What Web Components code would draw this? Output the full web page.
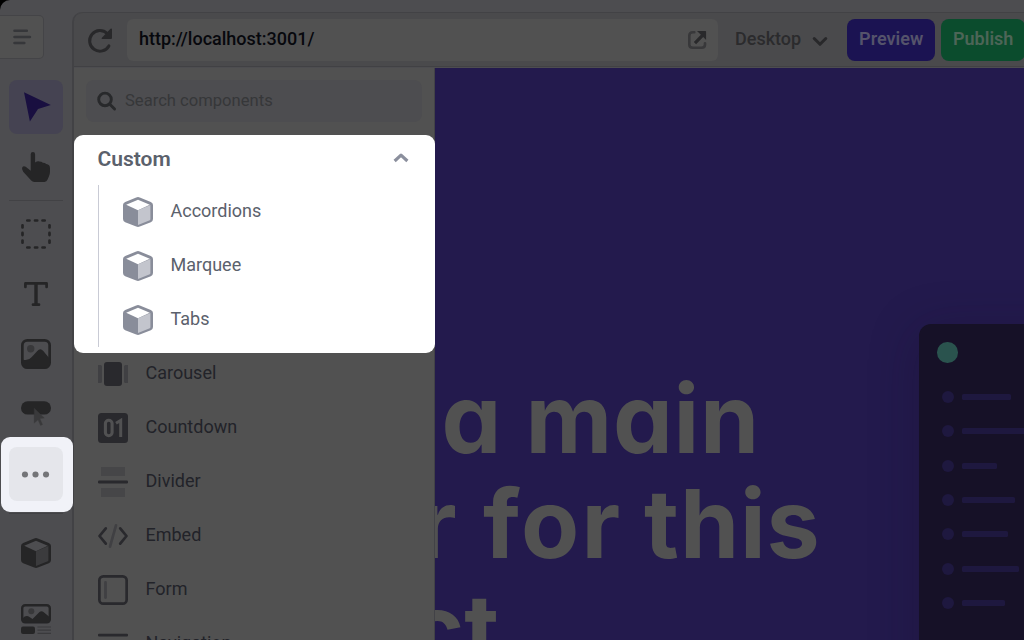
<!DOCTYPE html>
<html lang="en">
<head>
<meta charset="utf-8">
<title>Page builder</title>
<style>
html,body{margin:0;width:1024px;height:640px;overflow:hidden;background:#000;font-family:Roboto,"Liberation Sans",sans-serif}
</style>
</head>
<body>
<builder-app></builder-app>
<script>
const define = (name, css, html) => customElements.define(name, class extends HTMLElement {
  connectedCallback() {
    if (this.shadowRoot) return;
    const t = document.createElement('template');
    t.innerHTML = `<style>*{box-sizing:border-box}${css}</style>` + (typeof html === 'function' ? html(this) : html);
    this.attachShadow({mode: 'open'}).append(t.content.cloneNode(true));
  }
});

const cube = `<path fill="currentColor" d="M13.2.5q1.8-.8 3.6 0l11 4.400q2.200.9 2.200 3.200v14q0 2.300-2.200 3.200l-11 4.300q-1.800.8-3.600 0l-11-4.300Q0 24.400 0 22.100v-14q0-2.300 2.200-3.200z"/>
  <path fill="var(--face,#fff)" d="M3.200 7.700 15 2.800l11.800 4.900L15 13.300z"/><path fill="var(--side,#c3c5cd)" d="M15 13.300 27.400 8v14.300q0 .7-.6 1L15 28z"/>`;

const icons = {
  menu: `<g stroke="currentColor" stroke-width="2.600" stroke-linecap="round"><path d="M8.500 8.700h12.300M8.500 15h15.400M8.500 21h9.800"/></g>`,
  pointer: `<path fill="currentColor" d="M3 .3 29.800 13 17 16.900 8.900 29.600z"/>`,
  hand: `<path fill="currentColor" d="M9.700 2.200a2.200 2.200 0 0 1 4.400 0v8.300q2.200-1.500 4.100-1.100 2.400 0 3.700 1.400 2 .1 3.400 1.100 3.700.3 3.700 4.300v3.500q0 2.300-1.100 4.800l-1.300 3q-.9 2.400-3.200 2.400H13.200q-1.700 0-3-1.400L2.200 19.700Q.3 17 1.300 15.200q1.200-1.600 3.400-.4l5 4z"/>`,
  box: `<g fill="none" stroke="currentColor" stroke-width="2.700" stroke-linecap="round"><path d="M6.300 1.500h2.200M14 1.500h2.200M21.500 1.500h2.200M6.300 28.500h2.200M14 28.500h2.200M21.500 28.500h2.200M1.500 6.300v2.200M1.500 13.900v2.200M1.500 21.500v2.200M28.500 6.300v2.200M28.500 13.900v2.200M28.500 21.500v2.200"/></g>`,
  text: `<path fill="none" stroke="currentColor" stroke-width="2.700" stroke-linecap="round" stroke-linejoin="round" d="M4.400 8V4.400h21.200V8"/><path fill="none" stroke="currentColor" stroke-width="3.400" d="M15 4v21.500"/><path stroke="currentColor" stroke-width="2.700" stroke-linecap="round" d="M12 25.700h6"/>`,
  image: `<rect x="1.350" y="1.350" width="27.300" height="27.300" rx="5" fill="none" stroke="currentColor" stroke-width="2.700"/><circle cx="9.700" cy="9.700" r="3.700" fill="#38383a"/><path fill="currentColor" d="M1.500 20.500q5.500 2 9.300-2.500l5.500-6q3-3.500 6 0l6.200 7.500V24q0 4.500-4.500 4.500H6Q1.500 28.500 1.500 24z"/>`,
  button: `<rect x="0" y="2.200" width="30" height="13.400" rx="6.700" fill="currentColor"/><path fill="#39393b" stroke="#39393b" stroke-width=".4" d="M13.200 9.200 23.300 19l-4.500.5 2.700 6-1.900.9-2.600-5.600-3.800 3.300z"/>`,
  cube,
  media: `<rect x="1.200" y="1.200" width="27.600" height="17.200" rx="3" fill="none" stroke="currentColor" stroke-width="2.400"/><circle cx="10.300" cy="7.300" r="3" fill="#38383a"/><path fill="currentColor" d="M1.500 14.500q3.500-4 7-1.500l3 2 7-7q2-1.500 4 0l6 5v5.500h-27z"/><rect y="22.500" width="14" height="7.500" rx="2" fill="currentColor"/><path stroke="#3a3a3c" stroke-width="1.200" d="M16.500 23h13.500M16.500 26.200h13.500M16.500 29.300h13.500"/>`,
  carousel: `<path fill="#404043" d="M0 6h2.500Q4 6 4 7.500v15Q4 24 2.500 24H0zM30 6h-2.500Q26 6 26 7.500v15q0 1.500 1.500 1.500H30z"/><rect x="6" y="3" width="18" height="24" rx="3" fill="currentColor"/>`,
  countdown: `<rect width="30" height="30" rx="3.500" fill="currentColor"/><rect x="7.400" y="7.300" width="6.700" height="15.400" rx="3.300" fill="none" stroke="#515152" stroke-width="3.100"/><path d="M18 10.300l4.700-2.800v16.500" fill="none" stroke="#515152" stroke-width="3"/>`,
  divider: `<path fill="#464648" d="M3 0h24v9H3zM3 21h24v9H3z"/><rect y="13.500" width="30" height="3" rx="1.200" fill="currentColor"/>`,
  embed: `<g fill="none" stroke-linecap="round" stroke-linejoin="round" stroke-width="2.700"><path stroke="#404043" d="M18 4.300l-6 21.400"/><path stroke="currentColor" d="M7.800 7.400 1.500 15l6.300 7.600M22.200 7.400l6.300 7.600-6.300 7.600"/></g>`,
  form: `<rect x="1.350" y="1.350" width="27.300" height="27.300" rx="4" fill="none" stroke="currentColor" stroke-width="2.700"/><path stroke="#404043" stroke-width="2.800" stroke-linecap="round" d="M7.500 7.500v15"/>`,
  nav: `<rect y="4.700" width="30" height="2.700" rx="1" fill="currentColor"/>`,
  reload: `<path fill="none" stroke="currentColor" stroke-width="3" stroke-linecap="round" d="M23.900 20.900A10.300 10.300 0 1 1 22.200 8.500"/><path fill="currentColor" d="M25.500 3.800q1.200-1 1.500.4V13q0 1.100-1.100 1.100H17.200q-1.300-.3-.3-1.300z"/>`,
  search: `<circle cx="13" cy="13.400" r="6.300" fill="none" stroke="currentColor" stroke-width="2.900"/><path stroke="currentColor" stroke-width="2.900" stroke-linecap="round" d="M17.800 18.200 22.600 23"/>`,
  open: `<path fill="none" stroke="#38383a" stroke-width="2.600" stroke-linecap="round" d="M12.300 7.300h-1.500q-3.500 0-3.500 3.500v8.700q0 3.200 3.500 3.200h8.700q3.500 0 3.500-3.200v-1.300"/><path fill="currentColor" d="M15 5.900h8.300q.8 0 .8.800V15l-2.900-2.900-7.100 7.100-2.300-2.300 7.100-7.100z"/>`,
  down: `<path fill="none" stroke="currentColor" stroke-width="3" stroke-linecap="round" stroke-linejoin="round" d="m9.200 13.500 5.800 5.800 5.800-5.800"/>`,
  up: `<path fill="none" stroke="currentColor" stroke-width="3.200" stroke-linecap="square" stroke-linejoin="round" d="m9.800 16.900 5.200-4.800 5.200 4.800"/>`,
  more: `<g fill="currentColor"><circle cx="3.300" cy="15" r="3.400"/><circle cx="15" cy="15" r="3.400"/><circle cx="26.700" cy="15" r="3.400"/></g>`
};

define('ui-icon', `:host{display:block;flex:none;width:30px;height:30px}svg{display:block;width:100%;height:100%;overflow:visible}`,
  el => `<svg viewBox="0 0 30 30" aria-hidden="true">${icons[el.getAttribute('name')]}</svg>`);

define('tool-button', `:host{display:flex;align-items:center;justify-content:center;width:54px;height:54px;margin:3px 9px;border-radius:8px;flex:none;color:#252526;--face:#4d4d50;--side:#3b3b3d}
  :host([active]){background:#454352;color:#190f40;margin-top:0}`, el => `<ui-icon name="${el.getAttribute('icon')}"></ui-icon>`);

define('tool-rail', `:host{display:flex;flex-direction:column;width:72px;height:640px;position:relative;z-index:1}
  .menu{width:44px;height:44px;margin:15px 0 21px;border:1px solid #444447;border-left:0;border-radius:0 5px 5px 0;background:#515151;color:#36373a;display:flex;align-items:center;padding-left:6px;flex:none}
  .rule{height:1px;margin:3px 9px 3px;background:#424245;flex:none}
  .spot{flex:none;width:71.500px;height:75px;margin:-7px 0 0 1px;border-radius:9px;background:#f1f2f8;display:flex;align-items:center;padding-left:8px;position:relative}
  .more{width:54px;height:54px;border-radius:8px;background:#e5e6eb;color:#747578;display:flex;align-items:center;justify-content:center;margin-bottom:1px}
  .more ui-icon{width:27px;height:27px;margin-right:1px}`,
  `<div class="menu"><ui-icon name="menu"></ui-icon></div>
   <tool-button active icon="pointer"></tool-button><tool-button icon="hand"></tool-button>
   <div class="rule"></div>
   <tool-button icon="box"></tool-button><tool-button icon="text"></tool-button><tool-button icon="image"></tool-button><tool-button icon="button"></tool-button>
   <div class="spot"><div class="more"><ui-icon name="more"></ui-icon></div></div>
   <div class="rule" style="margin:1px 9px 9px"></div>
   <tool-button icon="cube"></tool-button><tool-button icon="media" style="margin-top:9px"></tool-button>`);

define('pill-button', `:host{display:flex;align-items:center;justify-content:center;height:42px;border-radius:8px;font-size:18px;font-weight:600;flex:none}`, `<slot></slot>`);

define('address-bar', `:host{display:flex;height:55px;padding:6px 0 0 11px;background:#4a4a4c;border-top:1px solid #424245;border-bottom:1px solid #414144;border-radius:9px 0 0 0;overflow:hidden;color:#28282a}
  .url{display:flex;align-items:center;justify-content:space-between;width:591px;height:42px;margin-left:12px;padding:0 6px 3px 12px;background:#515151;border-radius:6px;flex:none;font-size:18px;font-weight:500;color:#07080d}
  .url ui-icon{color:#29292b;margin-top:3px}
  .device{width:67px;margin:0 4px 0 17px;font-size:18px;font-weight:500;line-height:40px;color:#2b2b2d;white-space:nowrap}
  .a{background:#1b1352;color:#55536b;width:88px;margin-left:12px;padding-bottom:3px}.b{background:#0b4c2d;color:#4d6557;width:84px;margin-left:6px;padding-bottom:3px}
  .r{margin-top:6px}.d{margin-top:6px}`,
  `<ui-icon class="r" name="reload"></ui-icon><div class="url"><span>http://localhost:3001/</span><ui-icon name="open"></ui-icon></div>
   <span class="device">Desktop</span><ui-icon class="d" name="down"></ui-icon>
   <pill-button class="a">Preview</pill-button><pill-button class="b">Publish</pill-button>`);

define('component-row', `:host{display:flex;align-items:center;height:54px;font-size:18px;gap:17.500px;padding-left:24px;color:#29292d;flex:none}span{color:var(--label,#222329);padding-bottom:var(--lift,3px);white-space:nowrap}`,
  el => `<ui-icon name="${el.getAttribute('icon')}"></ui-icon><span><slot></slot></span>`);

define('custom-group', `:host{display:block;flex:none;width:361px;height:218px;margin-top:13px;background:#fff;border-radius:9px;position:relative;--label:#5b616c;--lift:4px}
  header{display:flex;justify-content:space-between;height:50px;padding:0 19px 0 23.500px;font-size:21px;font-weight:600;line-height:48px;color:#5b616c}
  header ui-icon{margin-top:8px;color:#8b8f9d}
  .items{margin-left:24px;height:162px;border-left:1px solid #c9cbd5}
  component-row{color:#898d9a}`,
  `<header><span>Custom</span><ui-icon name="up"></ui-icon></header><div class="items"><component-row icon="cube">Accordions</component-row><component-row icon="cube">Marquee</component-row><component-row icon="cube">Tabs</component-row></div>`);

define('component-panel', `:host{display:flex;flex-direction:column;width:361px;background:linear-gradient(#515151,#515151) no-repeat 0 0/360px 100%,#424247;padding-top:12px;position:relative;z-index:1;flex:none}
  .search{display:flex;align-items:center;width:336px;height:42px;margin-left:12px;padding:0 0 0 6px;border-radius:8px;background:#4d4d50;color:#28292b;font-size:16.600px;flex:none}
  .search span{color:#363739;padding:0 0 2px 3px}
  .list{margin-top:-6px}`,
  `<div class="search"><ui-icon name="search"></ui-icon><span>Search components</span></div>
   <custom-group></custom-group>
   <div class="list"><component-row icon="carousel">Carousel</component-row><component-row icon="countdown">Countdown</component-row><component-row icon="divider">Divider</component-row><component-row icon="embed">Embed</component-row><component-row icon="form">Form</component-row><component-row icon="nav">Navigation</component-row></div>`);

define('outline-card', `:host{display:block;position:absolute;left:484px;top:256px;width:220px;height:400px;padding:18px 0 0 18px;background:#161127;border-radius:12px 0 0 0;box-shadow:0 8px 50px rgba(22,17,39,.3)}
  .dot{width:20.500px;height:20.500px;border-radius:50%;background:#2a534e;margin:0 0 17.200px}
  .line{display:flex;align-items:center;gap:8px;height:34.400px;padding-left:4.500px}
  i{width:12px;height:12px;border-radius:50%;background:#1e183f}b{height:6px;border-radius:1.500px;background:#1e183f}`,
  `<div class="dot"></div>` + [49,72,35,53,46,57,43].map(w => `<div class="line"><i></i><b style="width:${w}px"></b></div>`).join(''));

define('page-canvas', `:host{display:block;flex:1;position:relative;overflow:hidden;background:#231a4d}
  h1{margin:0;padding-top:298px;font:680 95px/105px Inter,sans-serif;font-feature-settings:"cv11","ss03";color:#515151;white-space:nowrap}
  div{height:105px;display:flex}span{flex:none}`,
  `<h1><div><span style="width:84px;margin-left:6.500px">a</span><span style="letter-spacing:.7px">main</span></div>
   <div><span style="width:65px;margin-left:-17px">r</span><span style="width:161px;letter-spacing:2.200px">for</span><span style="letter-spacing:.9px">this</span></div>
   <div style="width:64px;justify-content:flex-end">ct</div></h1>
   <outline-card></outline-card>`);

define('builder-app', `:host{display:flex;width:1024px;height:640px;background:#4d4d50;border-radius:10px 0 0 0;overflow:hidden}
  main{display:flex;flex-direction:column;width:952px;padding-top:12px;flex:none}
  .frame{flex:1;display:flex;flex-direction:column;border-left:2px solid #424245;border-radius:10px 0 0 0;min-height:0}
  .work{display:flex;flex:1;min-height:0;margin-top:1px}`,
  `<tool-rail></tool-rail><main><div class="frame"><address-bar></address-bar><div class="work"><component-panel></component-panel><page-canvas></page-canvas></div></div></main>`);
</script>
</body>
</html>
